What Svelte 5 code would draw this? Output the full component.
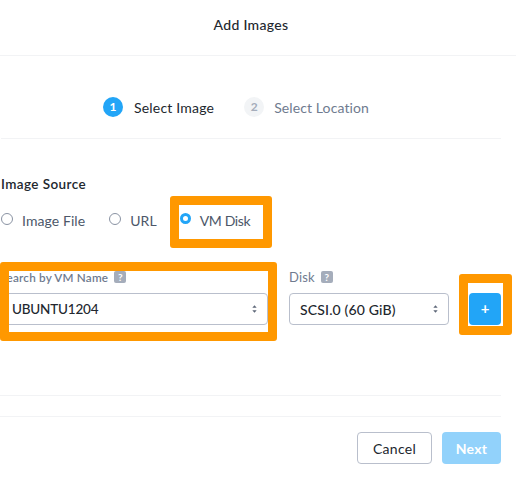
<script>
	let source = 'disk';
	const sources = [
		{ id: 'file', label: 'Image File' },
		{ id: 'url', label: 'URL' },
		{ id: 'disk', label: 'VM Disk' }
	];
</script>

<div class="modal">
	<header class="title">Add Images</header>

	<div class="steps">
		<div class="step active"><span class="num">1</span>Select Image</div>
		<div class="step"><span class="num">2</span>Select Location</div>
	</div>

	<section class="body">
		<div class="heading">Image Source</div>
		<div class="radios">
			{#each sources as s}
				<button class="radio" class:on={source === s.id} on:click={() => (source = s.id)}>
					<span class="dot"></span>{s.label}
				</button>
			{/each}
		</div>

		<div class="fields">
			<div class="field vm">
				<div class="label">Search by VM Name <span class="help">?</span></div>
				<div class="select">
					UBUNTU1204
					<svg class="updown" viewBox="0 0 6 9" width="5" height="8"><path d="M3 0l2.6 3H.4zM3 9L.4 6h5.2z" /></svg>
				</div>
			</div>
			<div class="field disk">
				<div class="label">Disk <span class="help">?</span></div>
				<div class="select">
					SCSI.0 (60 GiB)
					<svg class="updown" viewBox="0 0 6 9" width="5" height="8"><path d="M3 0l2.6 3H.4zM3 9L.4 6h5.2z" /></svg>
				</div>
			</div>
			<button class="add">+</button>
		</div>
	</section>

	<div class="spacer"></div>

	<footer class="actions">
		<button class="btn">Cancel</button>
		<button class="btn primary">Next</button>
	</footer>

	<!-- annotation boxes drawn on top of the screenshot -->
	<div class="mark m1"></div>
	<div class="mark m2"></div>
	<div class="mark m3"></div>
</div>

<style>
	:global(body) {
		margin: 0;
		background: #fff;
	}
	.modal {
		position: relative;
		width: 516px;
		height: 480px;
		overflow: hidden;
		font-family: Lato, "Liberation Sans", sans-serif;
		font-size: 14px;
		color: #22272e;
	}
	.title {
		height: 55px;
		line-height: 50px;
		text-align: center;
		font-size: 14px;
		font-weight: 500;
		letter-spacing: 0.3px;
		padding-right: 14px;
		border-bottom: 1px solid #f2f3f5;
	}
	.steps {
		display: flex;
		gap: 30px;
		height: 83px;
		box-sizing: border-box;
		padding: 41px 0 0 102px;
		margin-right: 15px;
		margin-left: 1px;
		border-bottom: 1px solid #f2f3f5;
	}
	.step {
		display: flex;
		align-items: center;
		gap: 10px;
		height: 20px;
		color: #6f7b8f;
		letter-spacing: 0.1px;
	}
	.step.active {
		gap: 11px;
		letter-spacing: 0.2px;
		color: #22272e;
	}
	.num {
		width: 20px;
		height: 20px;
		border-radius: 50%;
		background: #f2f4f6;
		color: #a5adbb;
		font-size: 12px;
		font-weight: 700;
		text-align: center;
		line-height: 20px;
		letter-spacing: 0;
	}
	.active .num {
		background: #22a5f7;
		color: #fff;
	}
	.body {
		padding: 36px 15px 0 1px;
	}
	.heading {
		font-size: 13.5px;
		font-weight: 600;
		line-height: 18px;
		letter-spacing: 0.4px;
	}
	.radios {
		display: flex;
		gap: 24px;
		margin-top: 18px;
		height: 18px;
	}
	.radio {
		display: flex;
		align-items: center;
		gap: 9px;
		padding: 0;
		border: 0;
		background: none;
		font: inherit;
		font-size: 14px;
		letter-spacing: 0.08px;
		color: #4c5769;
	}
	.radio.on {
		margin-left: -1px;
		letter-spacing: -0.35px;
	}
	.dot {
		width: 12px;
		height: 12px;
		box-sizing: border-box;
		border: 1px solid #8a93a3;
		border-radius: 50%;
		background: #fff;
		margin-top: -3px;
	}
	.on .dot {
		width: 11px;
		height: 11px;
		border: 3.5px solid #22a5f7;
	}
	.fields {
		display: flex;
		align-items: flex-end;
		margin-top: 40px;
	}
	.field {
		display: flex;
		flex-direction: column;
		gap: 8px;
	}
	.vm {
		width: 268px;
		margin-left: -1px;
	}
	.disk {
		width: 160px;
		margin-left: 21px;
	}
	.label {
		display: flex;
		align-items: center;
		gap: 6px;
		height: 16px;
		font-size: 13px;
		color: #6f7b8f;
		letter-spacing: 0.2px;
	}
	.vm .label {
		font-size: 11.7px;
		font-weight: 600;
	}
	.help {
		width: 12px;
		height: 12px;
		border-radius: 2px;
		background: #a5adbb;
		color: #fff;
		font-size: 10px;
		font-weight: 700;
		line-height: 12px;
		text-align: center;
		letter-spacing: 0;
	}
	.select {
		display: flex;
		align-items: center;
		justify-content: space-between;
		height: 32px;
		box-sizing: border-box;
		padding: 0 10px 0 11px;
		border: 1px solid #b9bfcc;
		border-radius: 4px;
		font-size: 13.5px;
		font-weight: 500;
		letter-spacing: -0.2px;
		color: #22272e;
	}
	.disk .select {
		padding-left: 10px;
		font-size: 14px;
		letter-spacing: 0.15px;
	}
	.updown {
		fill: #5d6778;
	}
	.add {
		width: 32px;
		height: 32px;
		margin-left: 20px;
		padding: 0 0 2px;
		border: 0;
		border-radius: 4px;
		background: #22a5f7;
		color: #fff;
		font-family: inherit;
		font-size: 15px;
		font-weight: 700;
		line-height: 28px;
	}
	.spacer {
		height: 20px;
		margin: 70px 15px 0 0;
		border-top: 1px solid #f2f3f5;
		border-bottom: 1px solid #f2f3f5;
	}
	.actions {
		display: flex;
		justify-content: flex-end;
		gap: 10px;
		margin-top: 15px;
		padding-right: 15px;
	}
	.btn {
		width: 75px;
		height: 32px;
		padding: 0;
		border: 1px solid #b9bfcc;
		border-radius: 4px;
		background: #fff;
		font-family: inherit;
		font-size: 14px;
		letter-spacing: 0.3px;
		color: #22272e;
	}
	.primary {
		width: 59px;
		border: 0;
		background: #92d2fb;
		color: #fff;
		font-weight: 700;
	}
	.mark {
		position: absolute;
		box-sizing: border-box;
		border: 9px solid #ff9800;
		border-radius: 3px;
		pointer-events: none;
	}
	.m1 {
		left: 170px;
		top: 196px;
		width: 102px;
		height: 52px;
	}
	.m2 {
		left: 0;
		top: 262px;
		width: 277px;
		height: 79px;
	}
	.m3 {
		left: 459px;
		top: 274px;
		width: 53px;
		height: 61px;
	}
</style>
